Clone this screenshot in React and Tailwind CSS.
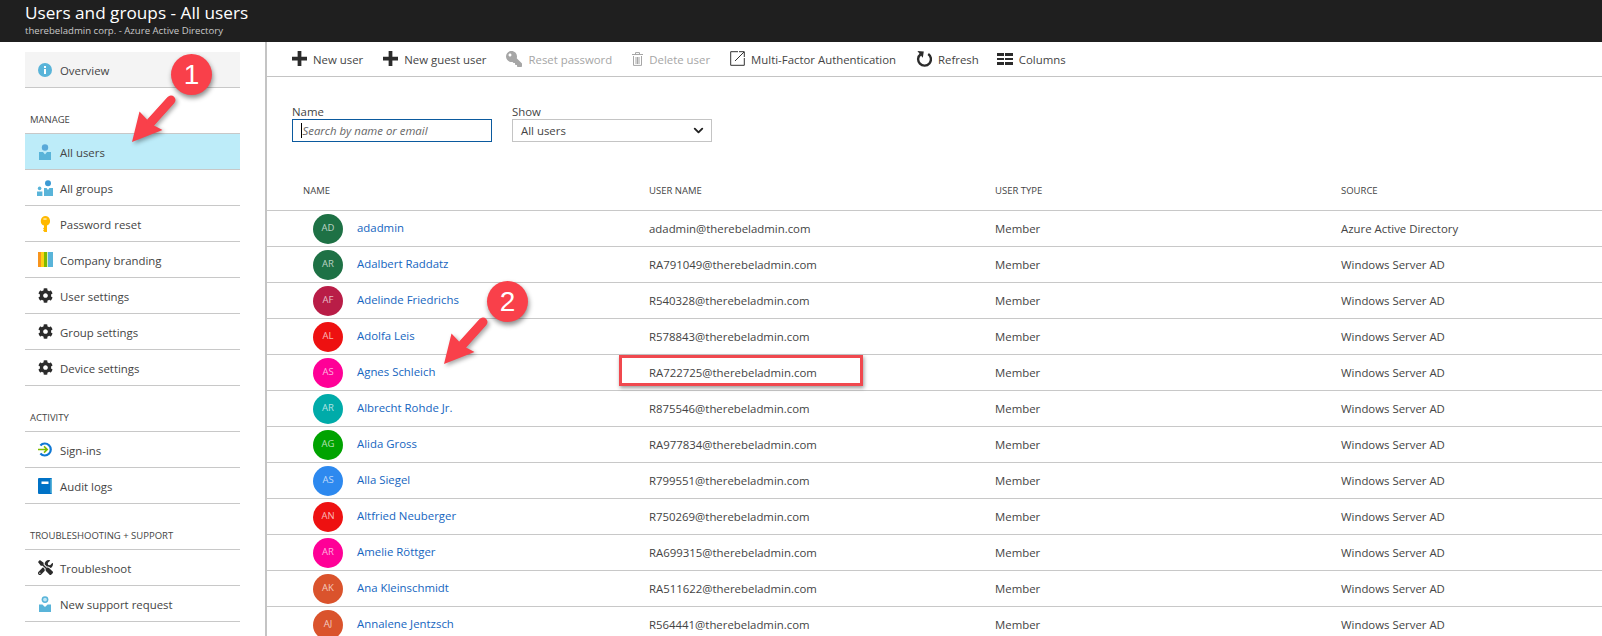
import { FaCog, FaKey, FaTools } from 'react-icons/fa'
import { ChevronDown } from 'lucide-react'

const users = [
  ['AD', 'bg-[#1e7145]', 'adadmin', 'adadmin@therebeladmin.com', 'Azure Active Directory'],
  ['AR', 'bg-[#1e7145]', 'Adalbert Raddatz', 'RA791049@therebeladmin.com', 'Windows Server AD'],
  ['AF', 'bg-[#b91d47]', 'Adelinde Friedrichs', 'R540328@therebeladmin.com', 'Windows Server AD'],
  ['AL', 'bg-[#ee1111]', 'Adolfa Leis', 'R578843@therebeladmin.com', 'Windows Server AD'],
  ['AS', 'bg-[#ff0097]', 'Agnes Schleich', 'RA722725@therebeladmin.com', 'Windows Server AD'],
  ['AR', 'bg-[#00aba9]', 'Albrecht Rohde Jr.', 'R875546@therebeladmin.com', 'Windows Server AD'],
  ['AG', 'bg-[#00a300]', 'Alida Gross', 'RA977834@therebeladmin.com', 'Windows Server AD'],
  ['AS', 'bg-[#2d89ef]', 'Alla Siegel', 'R799551@therebeladmin.com', 'Windows Server AD'],
  ['AN', 'bg-[#ee1111]', 'Altfried Neuberger', 'R750269@therebeladmin.com', 'Windows Server AD'],
  ['AR', 'bg-[#ff0097]', 'Amelie Röttger', 'RA699315@therebeladmin.com', 'Windows Server AD'],
  ['AK', 'bg-[#da532c]', 'Ana Kleinschmidt', 'RA511622@therebeladmin.com', 'Windows Server AD'],
  ['AJ', 'bg-[#da532c]', 'Annalene Jentzsch', 'R564441@therebeladmin.com', 'Windows Server AD'],
]

const InfoIcon = () => (
  <svg width="14" height="14" viewBox="0 0 14 14">
    <circle cx="7" cy="7" r="7" fill="#59b4d9" />
    <rect x="6" y="6" width="2" height="5" fill="#fff" />
    <rect x="6" y="3" width="2" height="2" fill="#fff" />
  </svg>
)

const UserIcon = () => (
  <svg width="14" height="16" viewBox="0 0 14 16">
    <circle cx="7" cy="3.5" r="3.2" fill="#59a9d9" />
    <path d="M1 8h4l2 2.5L9 8h4v8H1z" fill="#59b4d9" />
  </svg>
)

const GroupIcon = () => (
  <svg width="16" height="16" viewBox="0 0 16 16">
    <circle cx="11" cy="3.3" r="3" fill="#3c9ad4" />
    <path d="M7 8h2.6l1.4 2 1.4-2H16v8H7z" fill="#59b4d9" />
    <circle cx="2.6" cy="8.4" r="1.8" fill="#59b4d9" />
    <path d="M0 11.5h5.4V16H0z" fill="#59b4d9" />
  </svg>
)

const YellowKey = () => (
  <svg width="10" height="16" viewBox="0 0 10 16">
    <path d="M5 0a5 5 0 0 1 2 9.6V16H4.4L3 14.6l1-1-1-1 1-1V9.6A5 5 0 0 1 5 0z" fill="#ffb900" />
    <rect x="3.4" y="2.4" width="3.2" height="1.3" fill="#fff3c0" />
  </svg>
)

const BrandIcon = () => (
  <div className="flex h-[15px] w-[15px]">
    <div className="w-[3px] bg-[#f7941d]" />
    <div className="w-[3px] bg-[#fcd116]" />
    <div className="w-[3px] bg-[#7fba00]" />
    <div className="w-[1px] bg-[#d8ecc0]" />
    <div className="flex-1 bg-[#59b4d9]" />
  </div>
)

const SignInIcon = () => (
  <svg width="15" height="15" viewBox="0 0 15 15" fill="none">
    <path d="M2.4 3.4a6 6 0 1 1 0 8.2" stroke="#0f78d4" strokeWidth="2.2" />
    <path d="M0 7.5h8.6M6 4.4l3.2 3.1L6 10.6" stroke="#7fba00" strokeWidth="1.6" />
  </svg>
)

const BookIcon = () => (
  <svg width="14" height="16" viewBox="0 0 14 16">
    <rect width="14" height="16" rx="1" fill="#0072c6" />
    <rect x="12.4" y="1" width="1.6" height="14" fill="#59b4d9" />
    <rect x="3.5" y="3.5" width="7" height="2.5" fill="#fff" />
  </svg>
)

const SupportIcon = () => (
  <svg width="12" height="16" viewBox="0 0 12 16">
    <circle cx="6" cy="3.6" r="3.4" fill="#59b4d9" />
    <circle cx="6" cy="3.6" r="1.9" fill="#bfe6f5" />
    <path d="M0 8.4h3.4L6 11l2.6-2.6H12V16H0z" fill="#59b4d9" />
  </svg>
)

const PlusIcon = () => (
  <svg width="15" height="15" viewBox="0 0 16 16">
    <path d="M6 0h4v6h6v4h-6v6H6v-6H0V6h6z" fill="#2b2b2b" />
  </svg>
)

const TrashIcon = () => (
  <svg width="11" height="14" viewBox="0 0 11 14" fill="none" stroke="#a6a6a6">
    <path d="M0 2.5h11M3.5 2.5V.6h4v1.9M1.5 4v9.4h8V4M4 5v7M5.5 5v7M7 5v7" />
  </svg>
)

const ExternalIcon = () => (
  <svg width="15" height="15" viewBox="0 0 15 15" fill="none" stroke="#333">
    <path d="M8 .7H.7v13.6h13.6V7" />
    <path d="M5 10l9-9M9 .7h5.3V6" />
  </svg>
)

const RefreshIcon = () => (
  <svg width="16" height="17" viewBox="0 0 16 17" fill="none">
    <path d="M4.6 4.2a6.4 6.4 0 1 0 7.6-.2" stroke="#2b2b2b" strokeWidth="2.4" />
    <path d="M1.4 1l6.4.4-1 6.4z" fill="#2b2b2b" />
  </svg>
)

const ColumnsIcon = () => (
  <div className="grid h-[12px] w-[16px] grid-cols-2 grid-rows-3 gap-x-[1px] gap-y-[2px]">
    {[0, 1, 2, 3, 4, 5].map((i) => (
      <div key={i} className="bg-[#2b2b2b]" />
    ))}
  </div>
)

const NavItem = ({ icon, name, active, soft }) => (
  <div
    className={`flex h-[36px] items-center border-b border-[#c8c8c8] text-[11.4px] text-[#444] ${
      active ? 'bg-[#bdecf9]' : soft ? 'bg-[#f4f4f4]' : ''
    }`}
  >
    <div className="flex w-[35px] justify-center pl-[5px]">{icon}</div>
    <span className="pt-[3px]">{name}</span>
  </div>
)

const NavHead = ({ name }) => (
  <div className="flex h-[46px] items-end border-b border-[#c8c8c8] pb-[6px] pl-[5px] text-[9.5px] text-[#444]">
    {name}
  </div>
)

const ToolItem = ({ icon, name, off }) => (
  <div className={`flex items-center gap-[6px] text-[11.4px] ${off ? 'text-[#a6a6a6]' : 'text-[#444]'}`}>
    {icon}
    <span className="pt-[2px]">{name}</span>
  </div>
)

// the red callouts drawn on top of the shot
const Arrow = ({ className }) => (
  <svg
    width="46"
    height="50"
    viewBox="0 0 46 50"
    className={`absolute drop-shadow-[2px_2px_2px_rgba(0,0,0,0.35)] ${className}`}
  >
    <path d="M1 49L8.5 18.5 16.5 27 36.5 4.5 43 10 23 32.5 31.5 37z" fill="#f9404a" />
    <path d="M20 29L40 7" stroke="#f9404a" strokeWidth="9" strokeLinecap="round" />
  </svg>
)

const Badge = ({ n, className }) => (
  <div
    className={`absolute flex h-[41px] w-[41px] items-center justify-center rounded-full bg-[#f9404a] font-['Liberation_Sans',sans-serif] text-[28px] text-white shadow-[1px_3px_5px_rgba(0,0,0,0.45)] ${className}`}
  >
    {n}
  </div>
)

export default function App() {
  return (
    <div className="relative h-[636px] w-[1602px] overflow-hidden bg-white font-['Open_Sans',sans-serif]">
      <div className="h-[42px] bg-[#1f1f1f] pl-[25px] text-white">
        <div className="text-[17.2px] leading-[26px]">Users and groups - All users</div>
        <div className="text-[9.6px] leading-[10px] text-[#c8c8c8]">therebeladmin corp. - Azure Active Directory</div>
      </div>

      <div className="flex h-[594px]">
        <div className="w-[267px] shrink-0 border-r-2 border-[#c4c4c4] pl-[25px] pr-[25px] pt-[10px]">
          <NavItem soft icon={<InfoIcon />} name="Overview" />
          <NavHead name="MANAGE" />
          <NavItem active icon={<UserIcon />} name="All users" />
          <NavItem icon={<GroupIcon />} name="All groups" />
          <NavItem icon={<YellowKey />} name="Password reset" />
          <NavItem icon={<BrandIcon />} name="Company branding" />
          <NavItem icon={<FaCog size={15} color="#2b2b2b" />} name="User settings" />
          <NavItem icon={<FaCog size={15} color="#2b2b2b" />} name="Group settings" />
          <NavItem icon={<FaCog size={15} color="#2b2b2b" />} name="Device settings" />
          <NavHead name="ACTIVITY" />
          <NavItem icon={<SignInIcon />} name="Sign-ins" />
          <NavItem icon={<BookIcon />} name="Audit logs" />
          <NavHead name="TROUBLESHOOTING + SUPPORT" />
          <NavItem icon={<FaTools size={15} color="#2b2b2b" />} name="Troubleshoot" />
          <NavItem icon={<SupportIcon />} name="New support request" />
        </div>

        <div className="min-w-0 flex-1">
          <div className="flex h-[35px] items-center gap-5 border-b border-[#c4c4c4] pl-[25px]">
            <ToolItem icon={<PlusIcon />} name="New user" />
            <ToolItem icon={<PlusIcon />} name="New guest user" />
            <ToolItem off icon={<FaKey size={16} color="#a6a6a6" className="-scale-x-100" />} name="Reset password" />
            <ToolItem off icon={<TrashIcon />} name="Delete user" />
            <ToolItem icon={<ExternalIcon />} name="Multi-Factor Authentication" />
            <ToolItem icon={<RefreshIcon />} name="Refresh" />
            <div className="-ml-[2px]">
              <ToolItem icon={<ColumnsIcon />} name="Columns" />
            </div>
          </div>

          <div className="flex gap-5 pl-[25px] pt-[27px]">
            <div className="w-[200px]">
              <div className="h-[15px] text-[11.4px] leading-[15px] text-[#444]">Name</div>
              <div className="flex h-[23px] items-center border border-[#0b5a9e] pl-[8px] text-[11.4px] italic text-[#666]">
                <div className="mr-[0.5px] h-[15px] w-[1px] bg-black" />
                Search by name or email
              </div>
            </div>
            <div className="w-[200px]">
              <div className="h-[15px] text-[11.4px] leading-[15px] text-[#444]">Show</div>
              <div className="flex h-[23px] items-center justify-between border border-[#c4c4c4] pl-[8px] pr-[5px] text-[11.4px] text-[#444]">
                All users
                <ChevronDown size={15} strokeWidth={3} color="#222" />
              </div>
            </div>
          </div>

          <div className="grid h-[69px] grid-cols-[346px_346px_346px_1fr] items-end border-b border-[#c8c8c8] pb-[12px] pl-[36px] text-[9.5px] text-[#444]">
            <div>NAME</div>
            <div>USER NAME</div>
            <div>USER TYPE</div>
            <div>SOURCE</div>
          </div>

          {users.map(([initials, color, name, login, source]) => (
            <div
              key={login}
              className="grid h-[36px] grid-cols-[346px_346px_346px_1fr] items-center border-b border-[#c8c8c8] pl-[36px] text-[11.4px] text-[#444]"
            >
              <div className="flex items-center pl-[10px]">
                <div
                  className={`flex h-[30px] w-[30px] items-center justify-center rounded-full text-[9.5px] text-white/70 ${color}`}
                >
                  {initials}
                </div>
                <span className="pb-[2px] pl-[14px] text-[#1565c0]">{name}</span>
              </div>
              <div className="pt-[1px]">{login}</div>
              <div className="pt-[1px]">Member</div>
              <div className="pt-[1px]">{source}</div>
            </div>
          ))}
        </div>
      </div>

      <div className="absolute left-[619px] top-[355px] h-[31px] w-[244px] border-[3px] border-[#f0484e] shadow-[1px_2px_4px_rgba(0,0,0,0.4)]" />
      <Arrow className="left-[131px] top-[93px]" />
      <Badge n="1" className="left-[171px] top-[54px]" />
      <Arrow className="left-[443px] top-[315px]" />
      <Badge n="2" className="left-[487px] top-[281px]" />
    </div>
  )
}
